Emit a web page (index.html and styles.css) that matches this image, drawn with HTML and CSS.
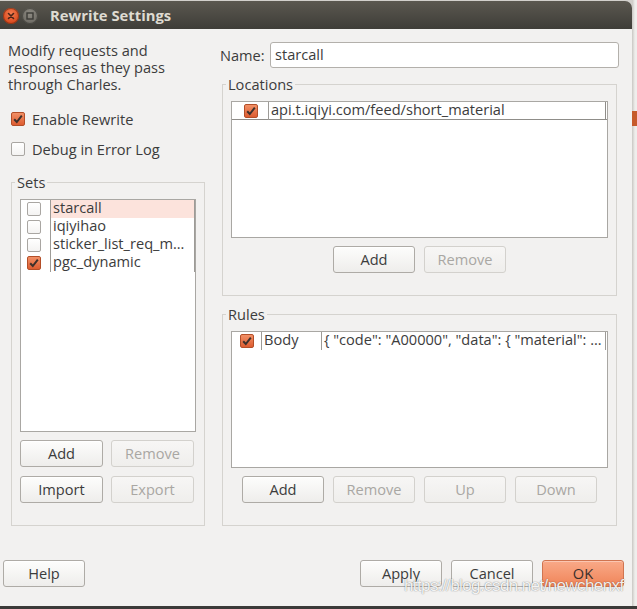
FILE: index.html
```html
<!DOCTYPE html>
<html>
<head>
<meta charset="utf-8">
<link rel="stylesheet" href="styles.css">
</head>
<body>
<div class="screen">
  <div class="desk">
    <div class="window">
      <div class="titlebar">
        <span class="wbtn close"><svg width="8" height="8" viewBox="0 0 8 8"><path d="M1.5 1.5 L6.5 6.5 M6.5 1.5 L1.5 6.5" stroke="#4a2418" stroke-width="1.6" stroke-linecap="round"/></svg></span>
        <span class="wbtn maxb"><svg width="8" height="8" viewBox="0 0 8 8"><rect x="1" y="1" width="6" height="6" fill="none" stroke="#3b3a36" stroke-width="1.4"/></svg></span>
        <span class="title">Rewrite Settings</span>
      </div>
      <div class="content">
        <div class="main">
          <div class="left">
            <p class="desc">Modify requests and<br>responses as they pass<br>through Charles.</p>
            <label class="check-row first">
              <span class="cb checked"><svg width="14" height="14" viewBox="0 0 14 14"><path d="M3.2 7.2 L5.8 10 L10.8 3.6" fill="none" stroke="#3d302b" stroke-width="2"/></svg></span>
              <span>Enable Rewrite</span>
            </label>
            <label class="check-row second">
              <span class="cb"></span>
              <span>Debug in Error Log</span>
            </label>
            <fieldset class="group sets">
              <legend>Sets</legend>
              <div class="list sets-list">
                <div class="row">
                  <div class="cell cb-cell sets-cb"><span class="cb small"></span></div>
                  <div class="cell text-cell sets-text selected">starcall</div>
                </div>
                <div class="row">
                  <div class="cell cb-cell sets-cb"><span class="cb small"></span></div>
                  <div class="cell text-cell sets-text">iqiyihao</div>
                </div>
                <div class="row">
                  <div class="cell cb-cell sets-cb"><span class="cb small"></span></div>
                  <div class="cell text-cell sets-text">sticker_list_req_m...</div>
                </div>
                <div class="row">
                  <div class="cell cb-cell sets-cb"><span class="cb small checked"><svg width="14" height="14" viewBox="0 0 14 14"><path d="M3.2 7.2 L5.8 10 L10.8 3.6" fill="none" stroke="#3d302b" stroke-width="2"/></svg></span></div>
                  <div class="cell text-cell sets-text">pgc_dynamic</div>
                </div>
              </div>
              <div class="btn-row">
                <button class="btn">Add</button>
                <button class="btn" disabled>Remove</button>
              </div>
              <div class="btn-row second-row">
                <button class="btn">Import</button>
                <button class="btn" disabled>Export</button>
              </div>
            </fieldset>
          </div>
          <div class="right">
            <div class="name-row">
              <span class="name-label">Name:</span>
              <div class="input">starcall</div>
            </div>
            <fieldset class="group locations">
              <legend>Locations</legend>
              <div class="list short-list">
                <div class="row loc-row">
                  <div class="cell cb-cell loc-cb"><span class="cb small checked"><svg width="14" height="14" viewBox="0 0 14 14"><path d="M3.2 7.2 L5.8 10 L10.8 3.6" fill="none" stroke="#3d302b" stroke-width="2"/></svg></span></div>
                  <div class="cell text-cell loc-text">api.t.iqiyi.com/feed/short_material</div>
                </div>
              </div>
              <div class="btn-row center">
                <button class="btn">Add</button>
                <button class="btn" disabled>Remove</button>
              </div>
            </fieldset>
            <fieldset class="group rules">
              <legend>Rules</legend>
              <div class="list short-list">
                <div class="row">
                  <div class="cell cb-cell rule-cb"><span class="cb small checked"><svg width="14" height="14" viewBox="0 0 14 14"><path d="M3.2 7.2 L5.8 10 L10.8 3.6" fill="none" stroke="#3d302b" stroke-width="2"/></svg></span></div>
                  <div class="cell text-cell rule-type">Body</div>
                  <div class="cell text-cell rule-val">{ "code": "A00000", "data": { "material": ...</div>
                </div>
              </div>
              <div class="btn-row center">
                <button class="btn">Add</button>
                <button class="btn" disabled>Remove</button>
                <button class="btn" disabled>Up</button>
                <button class="btn" disabled>Down</button>
              </div>
            </fieldset>
          </div>
        </div>
        <div class="footer">
          <button class="btn">Help</button>
          <span class="spacer"></span>
          <button class="btn">Apply</button>
          <button class="btn">Cancel</button>
          <button class="btn ok">OK</button>
        </div>
      </div>
      <div class="watermark">https://blog.csdn.net/newchenxf</div>
    </div>
    <div class="side"><div class="side-accent"></div></div>
  </div>
  <div class="taskbar"></div>
</div>
</body>
</html>
```

FILE: styles.css
```css
* { box-sizing: border-box; }
html, body { margin: 0; padding: 0; }
body {
  width: 637px;
  height: 609px;
  overflow: hidden;
  font-family: "Open Sans", "Noto Sans", sans-serif;
  font-size: 14.6px;
  color: #3c3c3c;
  background: #3a3a38;
}
.screen { width: 637px; height: 609px; display: flex; flex-direction: column; }
.desk { display: flex; height: 606px; background: #d2d0cc; }
.window {
  position: relative;
  z-index: 1;
  width: 632px;
  margin-top: 1px;
  display: flex;
  flex-direction: column;
}
.titlebar {
  height: 28px;
  background: linear-gradient(#5b5850, #3e3d38);
  border-radius: 0 7px 0 0;
  display: flex;
  align-items: center;
  padding-left: 3px;
}
.wbtn {
  width: 16px;
  height: 16px;
  border-radius: 50%;
  display: flex;
  align-items: center;
  justify-content: center;
  margin-top: 1px;
}
.close {
  background: radial-gradient(circle at 50% 35%, #f47d50, #d94a1e 70%, #b63c16);
  box-shadow: inset 0 0 0 1px rgba(110, 40, 15, 0.6);
}
.maxb {
  margin-left: 3px;
  background: radial-gradient(circle at 50% 35%, #8e8b83, #6f6c65 70%, #5c5a54);
  box-shadow: inset 0 0 0 1px rgba(40, 40, 36, 0.5);
}
.title {
  margin-left: 12px;
  font-weight: bold;
  font-size: 14.8px;
  color: #dfdbd2;
}
.content {
  flex: 1;
  background: #f2f1f0;
  display: flex;
  flex-direction: column;
}
.main { display: flex; }
.left {
  width: 206px;
  padding: 13px 0 0 8px;
  display: flex;
  flex-direction: column;
}
.desc { margin: 0; line-height: 17px; }
.check-row {
  display: flex;
  align-items: center;
  gap: 7px;
  height: 20px;
  padding-left: 3px;
}
.check-row.first { margin-top: 16px; }
.check-row.second { margin-top: 10px; }
.cb {
  width: 14px;
  height: 14px;
  flex: none;
  border-radius: 2px;
  background: linear-gradient(#ffffff, #f4f3f2);
  border: 1px solid #a9a6a2;
  display: flex;
  align-items: center;
  justify-content: center;
  overflow: hidden;
}
.cb.checked {
  background: linear-gradient(#f29066, #dd5c30);
  border: 1px solid #b34e28;
}
.cb svg { flex: none; margin: -1px; }
.group {
  border: 1px solid #d5d3cf;
  margin: 0;
  padding: 10px 8px 22px;
  min-width: 0;
}
.group legend {
  padding: 0 2px;
  margin-left: -5px;
  line-height: 14px;
}
.sets { margin-top: 16px; margin-left: 3px; width: 194px; }
.list {
  background: #ffffff;
  border: 1px solid #a9a7a3;
}
.sets-list { height: 233px; }
.short-list { height: 137px; }
.row { display: flex; height: 18px; }
.cell { height: 18px; }
.cb-cell {
  display: flex;
  align-items: center;
  justify-content: center;
  border-right: 1px solid #9d9b97;
}
.text-cell {
  padding-left: 2px;
  line-height: 15.5px;
  white-space: nowrap;
}
.sets-cb { width: 30px; padding-right: 3px; }
.sets-text { width: 144px; border-right: 1px solid #9d9b97; }
.selected { background: #fce3dc; }
.loc-row { border-bottom: 1px solid #8f8d89; height: 18px; }
.loc-cb { width: 37px; padding-left: 2px; }
.loc-text { flex: none; width: 337px; border-right: 1px solid #8f8d89; }
.rule-cb { width: 30px; }
.rule-type { width: 60px; border-right: 1px solid #9d9b97; }
.rule-val { width: 284px; border-right: 1px solid #9d9b97; }
.btn-row { display: flex; gap: 8px; margin-top: 8px; }
.btn-row.second-row { margin-top: 9px; }
.btn-row.center { justify-content: center; gap: 9px; }
.btn {
  width: 82px;
  height: 27px;
  padding: 0 0 1px;
  font-family: inherit;
  font-size: 14.6px;
  color: #3c3c3c;
  border: 1px solid #aeaba6;
  border-radius: 3px;
  background: linear-gradient(#fdfdfc, #eeedeb);
  box-shadow: inset 0 1px 0 #ffffff;
}
.sets .btn { width: 83px; }
.btn:disabled {
  color: #a9a7a3;
  border-color: #d3d1cd;
  background: linear-gradient(#f7f6f5, #efeeec);
  box-shadow: none;
}
.btn.ok {
  border-color: #d07450;
  background: linear-gradient(#f9a988, #f08559);
  box-shadow: inset 0 1px 0 rgba(255, 255, 255, 0.35);
  color: #3a302c;
}
.right {
  flex: 1;
  padding: 13px 13px 0 12px;
}
.name-row { display: flex; align-items: center; height: 26px; }
.name-label { width: 52px; padding-left: 2px; }
.input {
  flex: 1;
  height: 26px;
  border: 1px solid #b3b0ab;
  border-radius: 3px;
  background: #ffffff;
  padding-left: 4px;
  line-height: 23px;
}
.locations { margin: 9px 2px 0 4px; }
.rules { margin: 11px 2px 0 4px; }
.footer {
  display: flex;
  gap: 9px;
  margin-top: 34px;
  padding: 0 8px 0 3px;
}
.footer .spacer { flex: 1; }
.watermark {
  position: absolute;
  left: 404px;
  top: 575px;
  font-family: "Liberation Sans", Arial, sans-serif;
  font-size: 17px;
  letter-spacing: -0.6px;
  color: rgba(255, 255, 255, 0.92);
  text-shadow: 0 0 1px rgba(0, 0, 0, 0.45), 0 0 2px rgba(0, 0, 0, 0.15);
  white-space: nowrap;
}
.side {
  flex: 1;
  background: linear-gradient(90deg, #c9c7c3, #efeeec 3px);
}
.side-accent { margin-top: 111px; height: 15px; background: #c65a2b; }
.taskbar { flex: 1; background: #3b3a38; }
```
